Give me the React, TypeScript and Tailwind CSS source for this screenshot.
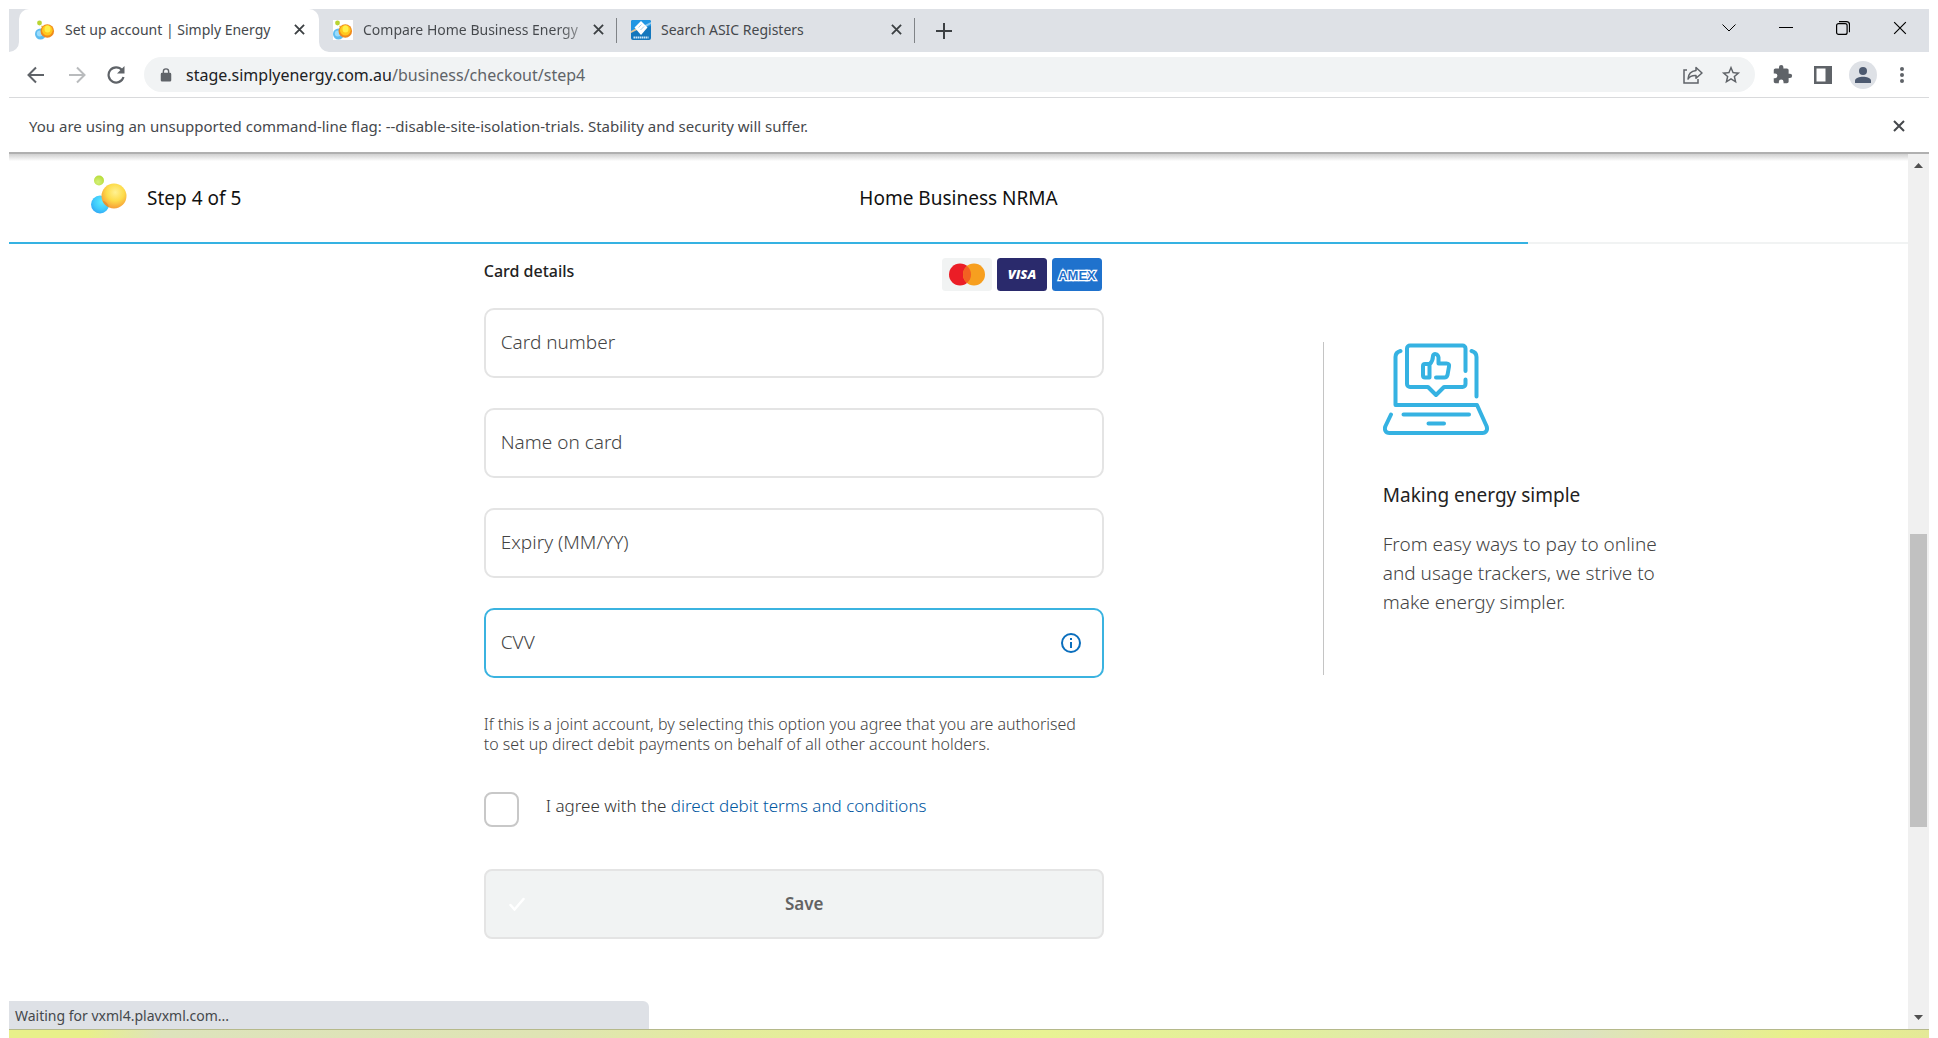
import type { ReactNode } from 'react'

function Bubbles({ className }: { className: string }) {
  return (
    <svg viewBox="0 0 36 39" className={className} aria-hidden="true">
      <defs>
        <radialGradient id="bubbleYellow" cx="0.55" cy="0.35" r="0.7">
          <stop offset="0" stopColor="#fff192" />
          <stop offset="0.5" stopColor="#fddc4a" />
          <stop offset="0.85" stopColor="#f8a93a" />
          <stop offset="1" stopColor="#f29a3c" />
        </radialGradient>
        <radialGradient id="bubbleBlue" cx="0.6" cy="0.35" r="0.75">
          <stop offset="0" stopColor="#5cecff" />
          <stop offset="0.6" stopColor="#3fc8fb" />
          <stop offset="1" stopColor="#2f9ff3" />
        </radialGradient>
        <radialGradient id="bubbleGreen" cx="0.4" cy="0.65" r="0.7">
          <stop offset="0" stopColor="#d3f07a" />
          <stop offset="1" stopColor="#b5db35" />
        </radialGradient>
      </defs>
      <circle cx="8" cy="5.5" r="5" fill="url(#bubbleGreen)" />
      <circle cx="9" cy="29.500" r="9" fill="url(#bubbleBlue)" />
      <circle cx="23" cy="21" r="12.500" fill="url(#bubbleYellow)" />
      <path d="M11.500 25.500a9 9 0 0 1 6.500 7a12.500 12.500 0 0 1-6.500-7z" fill="#d9872b" opacity="0.6" />
    </svg>
  )
}

function TabBubbles() {
  return (
    <svg viewBox="0 0 20 20" className="size-5 shrink-0" aria-hidden="true">
      <circle cx="4.500" cy="3" r="2.400" fill="#b9d432" />
      <circle cx="7" cy="6.300" r="0.900" fill="#dbe67c" />
      <circle cx="5.500" cy="14" r="5.500" fill="#5dbcf0" />
      <circle cx="4.800" cy="13.500" r="3" fill="#9adcfb" />
      <circle cx="12.300" cy="11" r="6.800" fill="#f08a1c" />
      <circle cx="12.300" cy="10.300" r="5.300" fill="#ffc81e" />
      <ellipse cx="12.500" cy="9" rx="3" ry="3.500" fill="#fff04a" />
    </svg>
  )
}

function AsicIcon() {
  return (
    <svg viewBox="0 0 20 20" className="size-5 shrink-0" aria-hidden="true">
      <rect width="20" height="20" rx="2" fill="#1477bd" />
      <path d="M2 0h16a2 2 0 0 1 2 2v4L0 11V2a2 2 0 0 1 2-2z" fill="#2196e3" />
      <path d="M0 11l8-4v2l-8 4z" fill="#e3c59a" />
      <path d="M12 6l8-4v2l-7 4z" fill="#8cc8ef" />
      <path d="M10 1l6.500 6.500L10 15 3.500 7.500z" fill="#fff" />
      <path d="M7.500 7.500l3-3M9.500 10l3.500-3.500" stroke="#a9cfe9" />
      <path d="M2.500 17.500h15" stroke="#cfe6f6" strokeWidth="2" strokeDasharray="1.500 0.500" />
    </svg>
  )
}

function Cross({ className, width = 2 }: { className: string; width?: number }) {
  return (
    <svg viewBox="0 0 12 12" className={className} fill="none" stroke="currentColor" strokeWidth={width} aria-hidden="true">
      <path d="M1 1l10 10M11 1L1 11" />
    </svg>
  )
}

function Tab({ icon, title, active, faded }: { icon: ReactNode; title: string; active?: boolean; faded?: boolean }) {
  return (
    <div
      role="tab"
      aria-selected={!!active}
      className={
        active
          ? 'relative flex w-[300px] items-center rounded-t-[10px] bg-white pr-[14px] pb-0.5 pl-4'
          : 'relative flex w-[298px] items-center pr-[13px] pb-0.5 pl-[14px]'
      }
    >
      {active && (
        <>
          <svg viewBox="0 0 10 10" className="absolute bottom-0 -left-2.5 size-2.5" aria-hidden="true"><path d="M10 0v10H0A10 10 0 0 0 10 0z" fill="#fff" /></svg>
          <svg viewBox="0 0 10 10" className="absolute -right-2.5 bottom-0 size-2.5" aria-hidden="true"><path d="M0 0v10h10A10 10 0 0 1 0 0z" fill="#fff" /></svg>
        </>
      )}
      {icon}
      <span className={faded ? 'ml-[10px] grow overflow-hidden bg-linear-to-r from-[#45484c] from-85% to-[#c8cacd] bg-clip-text text-sm whitespace-nowrap text-transparent' : 'ml-[10px] grow text-sm whitespace-nowrap text-[#45484c]'}>
        {title}
      </span>
      <button type="button" aria-label="Close tab" className="text-[#3c4043]">
        <Cross className="size-[11px]" />
      </button>
      {!active && <span className="absolute top-[9px] right-0 h-[25px] w-px bg-[#808387]" />}
    </div>
  )
}

function TabStrip() {
  return (
    <div className="flex h-[43px] bg-[#dee1e6] pl-[10px]">
      <div role="tablist" className="flex">
        <Tab active icon={<TabBubbles />} title="Set up account | Simply Energy" />
        <Tab faded icon={<span className="bg-white"><TabBubbles /></span>} title="Compare Home Business Energy" />
        <Tab icon={<AsicIcon />} title="Search ASIC Registers" />
      </div>
      <button type="button" aria-label="New tab" className="ml-[21px] text-[#3c4043]">
        <svg viewBox="0 0 16 16" className="size-4" stroke="currentColor" strokeWidth="2" aria-hidden="true"><path d="M8 0v16M0 8h16" /></svg>
      </button>
      <div className="mr-[22px] ml-auto flex items-center gap-[43px] pb-1.5 text-black">
        <button type="button" aria-label="Search tabs"><svg viewBox="0 0 14 14" className="size-3.5" fill="none" stroke="currentColor" aria-hidden="true"><path d="M0.500 3.500L7 10l6.500-6.500" /></svg></button>
        <button type="button" aria-label="Minimise"><svg viewBox="0 0 14 14" className="size-3.5" stroke="currentColor" aria-hidden="true"><path d="M0 6.500h14" /></svg></button>
        <button type="button" aria-label="Restore"><svg viewBox="0 0 14 14" className="size-3.5" fill="none" stroke="currentColor" strokeWidth="1.200" aria-hidden="true"><rect x="0.600" y="2.600" width="10.500" height="10.800" rx="2" /><path d="M3 0.700h7.500a3 3 0 0 1 3 3v7.500" /></svg></button>
        <button type="button" aria-label="Close window"><Cross className="size-3.5" width={1} /></button>
      </div>
    </div>
  )
}

function Toolbar() {
  return (
    <div className="flex h-[46px] items-center border-b border-[#d9dadc] pr-[25px] pl-[18px] text-[#5f6368]">
      <button type="button" aria-label="Back"><svg viewBox="0 0 18 18" className="size-[18px]" fill="none" stroke="currentColor" strokeWidth="2" aria-hidden="true"><path d="M17 9H2M9 1.500L1.500 9 9 16.500" /></svg></button>
      <button type="button" aria-label="Forward" className="ml-[23px] text-[#b9bbbd]"><svg viewBox="0 0 18 18" className="size-[18px]" fill="none" stroke="currentColor" strokeWidth="2" aria-hidden="true"><path d="M1 9h15M9 1.500L16.500 9 9 16.500" /></svg></button>
      <button type="button" aria-label="Reload" className="ml-[21px]"><svg viewBox="0 0 18 18" className="size-[18px]" fill="none" stroke="currentColor" strokeWidth="2.200" aria-hidden="true"><path d="M15 4a7.600 7.600 0 1 0 1.500 7" /><path d="M17.500 0v7.500H10z" fill="currentColor" stroke="none" /></svg></button>
      <div className="ml-[19px] flex h-[35px] grow items-center rounded-full bg-[#f1f3f4] pr-[13px] pl-4">
        <svg viewBox="0 0 12 16" className="h-3.5 w-3 shrink-0" aria-hidden="true"><path d="M1.500 5.500h9a1.500 1.500 0 0 1 1.500 1.500v7a1.500 1.500 0 0 1-1.500 1.500h-9A1.500 1.500 0 0 1 0 14V7a1.500 1.500 0 0 1 1.500-1.500z" fill="currentColor" /><path d="M3 6V4a3 3 0 0 1 6 0v2" fill="none" stroke="currentColor" strokeWidth="1.600" /></svg>
        <span className="ml-[14px] grow text-base text-[#202124]">stage.simplyenergy.com.au<span className="text-[#5f6368]">/business/checkout/step4</span></span>
        <button type="button" aria-label="Share"><svg viewBox="0 0 20 18" className="h-[18px] w-5" fill="none" stroke="currentColor" strokeWidth="1.500" aria-hidden="true"><path d="M4 4H1v13h14v-4" /><path d="M13 1.500L19 7l-6 5.300V9.500C9 9.300 6.500 10.500 5 13c.3-4.500 3-8 8-8.500z" strokeLinejoin="round" /></svg></button>
        <button type="button" aria-label="Bookmark this page" className="ml-[17px]"><svg viewBox="0 0 24 24" className="size-[22px]" fill="currentColor" aria-hidden="true"><path d="M22 9.240l-7.190-.620L12 2 9.190 8.630 2 9.240l5.460 4.730L5.820 21 12 17.270 18.180 21l-1.630-7.030L22 9.240zM12 15.400l-3.760 2.270 1-4.280-3.320-2.880 4.380-.380L12 6.100l1.710 4.040 4.380.380-3.320 2.880 1 4.280L12 15.400z" /></svg></button>
      </div>
      <button type="button" aria-label="Extensions" className="ml-[17px]"><svg viewBox="0 0 24 24" className="size-[21px]" fill="currentColor" aria-hidden="true"><path d="M20.500 11H19V7c0-1.100-.9-2-2-2h-4V3.500a2.500 2.500 0 0 0-5 0V5H4c-1.100 0-1.990.9-1.990 2v3.800H3.500a2.700 2.700 0 0 1 0 5.400H2V20c0 1.100.9 2 2 2h3.800v-1.500a2.700 2.700 0 0 1 5.400 0V22H17c1.100 0 2-.9 2-2v-4h1.500a2.500 2.500 0 0 0 0-5z" /></svg></button>
      <button type="button" aria-label="Side panel" className="ml-[21px]"><svg viewBox="0 0 18 18" className="size-[18px]" aria-hidden="true"><path d="M0 0h18v18H0zM2.500 2.500v13h9v-13z" fill="currentColor" fillRule="evenodd" /></svg></button>
      <button type="button" aria-label="Profile" className="ml-[17px] grid size-7 place-items-center rounded-full bg-[#dee1e6] text-[#4d5a70]"><svg viewBox="0 0 16 16" className="size-4" fill="currentColor" aria-hidden="true"><circle cx="8" cy="4" r="4" /><path d="M0 16v-2.500C0 11 4.500 9.700 8 9.700s8 1.300 8 3.800V16z" /></svg></button>
      <button type="button" aria-label="Menu" className="ml-[23px]"><svg viewBox="0 0 4 16" className="h-4 w-1" fill="currentColor" aria-hidden="true"><circle cx="2" cy="2" r="2" /><circle cx="2" cy="8" r="2" /><circle cx="2" cy="14" r="2" /></svg></button>
    </div>
  )
}

function CardLogos() {
  return (
    <div className="flex gap-[5px]">
      <svg viewBox="0 0 50 33" className="h-[33px] w-[50px]" role="img" aria-label="Mastercard">
        <rect width="50" height="33" rx="3.500" fill="#f1f3f3" />
        <circle cx="18" cy="16.500" r="11" fill="#eb1d26" />
        <circle cx="32" cy="16.500" r="11" fill="#f79f1f" />
        <path d="M25 8a11 11 0 0 1 0 17a11 11 0 0 1 0-17z" fill="#f26122" />
      </svg>
      <svg viewBox="0 0 50 33" className="h-[33px] w-[50px]" role="img" aria-label="Visa">
        <rect width="50" height="33" rx="3.500" fill="#2a2a6c" />
        <text x="25" y="21" textAnchor="middle" fontFamily="Open Sans" fontWeight="800" fontStyle="italic" fontSize="13" fill="#fff">VISA</text>
      </svg>
      <svg viewBox="0 0 50 33" className="h-[33px] w-[50px]" role="img" aria-label="Amex">
        <rect width="50" height="33" rx="3.500" fill="#1f72cd" />
        <text x="25" y="22" textAnchor="middle" fontFamily="Liberation Sans" fontWeight="700" fontSize="13" fill="#1f72cd" stroke="#fff" strokeWidth="2.400" paintOrder="stroke">AMEX</text>
      </svg>
    </div>
  )
}

function Field({ id, label, focused, children }: { id: string; label: string; focused?: boolean; children?: ReactNode }) {
  return (
    <div className={focused ? 'relative flex h-[70px] items-center rounded-[10px] border-2 border-[#3bb3e0]' : 'relative flex h-[70px] items-center rounded-[10px] border-2 border-[#e4e4e4]'}>
      <input id={id} type="text" className="peer h-full min-w-0 grow bg-transparent px-[15px] text-[19px] font-light text-[#333] outline-none" />
      <label htmlFor={id} className="absolute inset-y-0 left-[15px] flex items-center pb-0.5 text-[19px] font-light text-[#444]">{label}</label>
      {children}
    </div>
  )
}

function LaptopIcon() {
  return (
    <svg viewBox="0 0 106 92" className="h-[92px] w-[106px]" fill="none" stroke="#35b2e2" strokeWidth="4" strokeLinecap="round" strokeLinejoin="round" aria-hidden="true">
      <path d="M17.500 8c-3 .8-5 2.500-5 6v48H94l9.500 21c1.500 4-.5 7-4 7H6.500c-4 0-5.500-3.500-4-7L8 71.500" />
      <path d="M88.500 8c3 .8 5 2.500 5 6v39.500" />
      <path d="M82.500 28V5.500a3 3 0 0 0-3-3H27a3 3 0 0 0-3 3V41a3 3 0 0 0 3 3h18l8 8 8-8h18.500a3 3 0 0 0 3-3v-4.500" />
      <path d="M20.500 71.500H86M45.500 80.500H61" />
      <path d="M46.500 22.500v12h-4.500a2 2 0 0 1-2-2V23a2 2 0 0 1 2-2h4.500zM46.500 21.500c2.500-2.500 3.500-4.500 3.500-8.500.2-3 5-2.500 5.500 1.500v6h8c2 0 3 1.200 2.500 3l-1.500 8.500c-.5 1.800-1.500 2.500-3 2.500H53" />
    </svg>
  )
}

function CheckoutHeader() {
  return (
    <header className="bg-linear-to-b from-[#d0d0d0] via-white via-8% to-white">
      <div className="grid h-[88px] grid-cols-[1fr_auto_1fr] items-center px-[82px]">
        <div className="flex items-center">
          <Bubbles className="mb-2 h-[39px] w-9" />
          <p className="ml-5 text-[19px] text-[#111]">Step 4 of 5</p>
        </div>
        <h1 className="text-[19px] text-[#111]">Home Business NRMA</h1>
      </div>
      <div role="progressbar" aria-label="Checkout progress" aria-valuenow={80} aria-valuemin={0} aria-valuemax={100} className="h-0.5 bg-[#f1f3f3]">
        <div className="h-full w-4/5 bg-[#35b2e2]" />
      </div>
    </header>
  )
}

function PaymentForm() {
  return (
    <form className="ml-[25%] w-full max-w-[620px]">
      <div className="mt-[14px] flex justify-between pr-0.5">
        <h2 className="text-base leading-[26px] font-medium text-[#222]">Card details</h2>
        <CardLogos />
      </div>
      <div className="mt-[17px] grid gap-[30px]">
        <Field id="card-number" label="Card number" />
        <Field id="card-name" label="Name on card" />
        <Field id="card-expiry" label="Expiry (MM/YY)" />
        <Field id="card-cvv" label="CVV" focused>
          <button type="button" aria-label="About the CVV" className="mr-[21px]">
            <svg viewBox="0 0 20 20" className="size-5" fill="none" stroke="#0a6ebd" strokeWidth="2" aria-hidden="true"><circle cx="10" cy="10" r="9" /><path d="M10 9v6M10 5v2" /></svg>
          </button>
        </Field>
      </div>
      <p className="mt-9 text-base leading-5 font-light text-[#444]">
        If this is a joint account, by selecting this option you agree that you are authorised<br />
        to set up direct debit payments on behalf of all other account holders.
      </p>
      <div className="mt-[38px] flex">
        <input id="agree" type="checkbox" className="size-[35px] shrink-0 appearance-none rounded-lg border-2 border-[#c8c8c8] bg-white" />
        <label htmlFor="agree" className="ml-[27px] text-[17px] leading-7 font-light text-[#333]">
          I agree with the <a href="#terms" className="text-[#00569f]">direct debit terms and conditions</a>
        </label>
      </div>
      <button type="submit" className="mt-[42px] mb-16 flex h-[70px] w-full items-center rounded-lg border-2 border-[#e4e4e4] bg-[#f1f3f3] pl-[23px] text-[17px] font-semibold text-[#636363]">
        <svg viewBox="0 0 16 14" className="h-3.5 w-4" fill="none" stroke="#fff" strokeWidth="2.500" strokeLinecap="round" aria-hidden="true"><path d="M1.500 8l4 4.500L14.500 2" /></svg>
        <span className="grow pr-[18px]">Save</span>
      </button>
    </form>
  )
}

function Aside() {
  return (
    <aside className="mt-[98px] ml-[219px] flex h-[333px] w-[360px] shrink-0 flex-col border-l border-[#c4c4c4] pt-px pl-[59px]">
      <LaptopIcon />
      <h2 className="mt-[46px] text-[19px] leading-7 text-[#222]">Making energy simple</h2>
      <p className="mt-[21px] text-[19px] leading-[29px] font-light text-[#444]">
        From easy ways to pay to online<br />and usage trackers, we strive to<br />make energy simpler.
      </p>
    </aside>
  )
}

function Scrollbar() {
  return (
    <div className="flex w-[21px] flex-col items-center bg-[#f0f0f0]" aria-hidden="true">
      <svg viewBox="0 0 21 21" className="size-[21px]"><path d="M6 14l4.500-5 4.500 5z" fill="#505050" /></svg>
      <div className="flex-[359]" />
      <div className="w-[17px] flex-[293] bg-[#c1c1c1]" />
      <div className="flex-[181]" />
      <svg viewBox="0 0 21 21" className="size-[21px]"><path d="M6 7l4.500 5L15 7z" fill="#505050" /></svg>
    </div>
  )
}

export default function App() {
  return (
    <div className="flex min-h-screen flex-col bg-white pt-[9px] font-['Noto_Sans',sans-serif]">
      <div className="mx-[9px] flex grow flex-col">
        <TabStrip />
        <Toolbar />
        <div className="flex h-[56px] items-center justify-between border-b-2 border-[#b0b0b0] pt-0.5 pr-6 pl-5 text-[#45484c]">
          <p className="text-[15px]">You are using an unsupported command-line flag: --disable-site-isolation-trials. Stability and security will suffer.</p>
          <button type="button" aria-label="Dismiss"><Cross className="size-3" /></button>
        </div>
        <div className="relative flex grow">
          <main className="grow">
            <CheckoutHeader />
            <div className="flex">
              <PaymentForm />
              <Aside />
            </div>
          </main>
          <Scrollbar />
          <div role="status" className="absolute bottom-0 left-0 flex h-7 w-1/3 items-center rounded-tr-md bg-[#dee1e6] pt-0.5 pl-1.5 text-sm text-[#45484c]">
            Waiting for vxml4.plavxml.com...
          </div>
        </div>
      </div>
      <div className="mx-[9px] border-t border-[#b5b98a]">
        <div className="h-2 bg-[linear-gradient(to_right,#e8f08a_0%,#e8f08a_4%,#dde3bc_8%,#dfe4b4_28%,#e4ec9c_38%,#e8f294_54%,#e2ef9c_66%,#dde2c0_82%,#e8f08a_93%,#e4e998_100%)]" />
      </div>
    </div>
  )
}
